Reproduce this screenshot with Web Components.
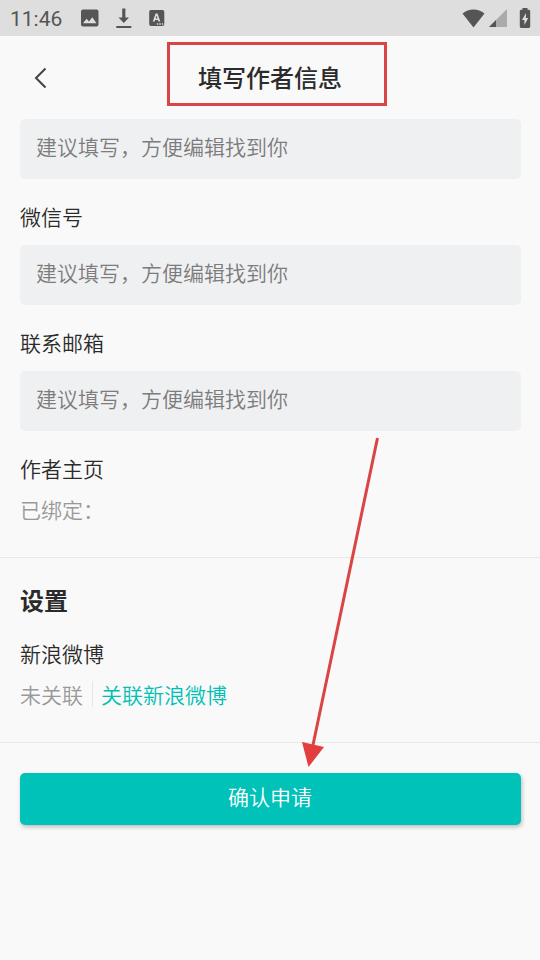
<!DOCTYPE html>
<html lang="zh-CN">
<head>
<meta charset="utf-8">
<meta name="viewport" content="width=device-width, initial-scale=1">
<title>填写作者信息</title>
<style>
  body {
    margin: 0;
    background: #f9f9f9;
    color: #2b2b2b;
    font: 350 21px/26px "Noto Sans CJK SC", sans-serif;
  }
</style>
</head>
<body>
<author-page></author-page>

<script>
const define = (name, html, setup) => {
  const template = document.createElement('template');
  template.innerHTML = html;
  customElements.define(name, class extends HTMLElement {
    constructor() {
      super();
      this.attachShadow({ mode: 'open' }).append(template.content.cloneNode(true));
    }
    connectedCallback() {
      if (setup) setup(this, this.shadowRoot);
    }
  });
};

define('status-bar', `
  <style>
    :host { display: flex; align-items: center; height: 36px; padding: 0 9px 0 10px; background: #dedede; color: #555; font-family: Roboto, sans-serif; font-weight: 400; }
    svg { display: block; fill: currentColor; }
    time { margin-right: 18px; padding-top: 1px; }
    .left { display: flex; align-items: center; gap: 15px; flex: 1; }
    .right { display: flex; align-items: center; gap: 4px; }
    .right svg:last-child { margin-left: 8px; }
  </style>
  <time>11:46</time>
  <div class="left">
    <svg width="20" height="20" viewBox="0 0 20 20"><path fill-rule="evenodd" d="M3 1.500h13.500a2 2 0 0 1 2 2v13a2 2 0 0 1-2 2H3a2 2 0 0 1-2-2v-13a2 2 0 0 1 2-2ZM3 15.300h13.500l-4.200-6-3.300 4.200-2.400-2.800Z"/></svg>
    <svg width="18" height="22" viewBox="0 0 18 22"><path d="M7.200 1.500h3.200v9H14L8.800 16 3.500 10.500h3.700ZM1.300 19h15v2h-15Z"/></svg>
    <svg width="18" height="18" viewBox="0 0 18 18"><path fill-rule="evenodd" d="M3 1h11.500a1.800 1.800 0 0 1 1.800 1.800v12.400a1.800 1.800 0 0 1-1.800 1.800H3a1.800 1.800 0 0 1-1.800-1.800V2.800A1.800 1.800 0 0 1 3 1ZM7.600 4.500 4.800 12.500h1.800l.5-1.600h2.900l.5 1.600h1.800L9.500 4.500Zm1 1.900.9 3.100H7.600ZM8.800 14.200v1.500h1.500v-1.500Zm2.500 0v1.500h1.500v-1.500Zm2.500 0v1.500h1.300v-1.500Z"/></svg>
  </div>
  <div class="right">
    <svg width="23" height="19" viewBox="0 0 23 19"><path d="M0.500 4.500C7-.8 16-.8 22.500 4.500L11.500 18.500Z"/></svg>
    <svg width="18" height="18" viewBox="0 0 18 18"><path fill="#aaa" d="M18 0v18H0Z"/><path d="M7 11v7H0Z"/></svg>
    <svg width="12" height="22" viewBox="0 0 12 22"><path fill-rule="evenodd" d="M3.500 1h5v1.800h1.300c.8 0 1.400.6 1.400 1.400v15.400c0 .8-.6 1.400-1.400 1.400H2.200c-.8 0-1.400-.6-1.400-1.400V4.200c0-.8.6-1.400 1.400-1.400h1.300ZM7 6l-4 7h2.400v5l3.800-7H6.800Z"/></svg>
  </div>
`);

define('page-header', `
  <style>
    :host { display: grid; grid-template-columns: 42px 1fr 42px; align-items: center; height: 83px; padding: 0 20px; }
    button { display: flex; align-items: center; justify-content: center; width: 42px; height: 42px; margin: 0; padding: 0; border: 0; background: none; color: #444; }
    h1 { margin: 0 0 2px; justify-self: center; position: relative; font-size: 24px; line-height: 36px; font-weight: 500; }
    .mark { position: absolute; inset: -17px -45px -11px -31px; border: 3px solid #d94545; pointer-events: none; }
  </style>
  <button type="button" aria-label="返回">
    <svg width="16" height="22" viewBox="0 0 16 22" fill="none" stroke="currentColor" stroke-width="2"><path d="M12.500 1.500 3 11l9.500 9.500"/></svg>
  </button>
  <h1><slot></slot><span class="mark"></span></h1>
`);

define('text-field', `
  <style>
    :host { display: flex; flex-direction: column; }
    label { padding: 24px 0 16px; }
    :host([unlabelled]) label { display: none; }
    input { box-sizing: border-box; width: 100%; height: 60px; margin: 0; padding: 0 16px 6px; border: 0; border-radius: 5px; background: #eff0f2; color: inherit; font: inherit; outline: 0; }
    input::placeholder { color: #7c7c7c; opacity: 1; }
  </style>
  <label for="box"><slot></slot></label>
  <input id="box" type="text">
`, (host, root) => {
  const input = root.getElementById('box');
  input.placeholder = host.getAttribute('placeholder') || '';
  if (host.hasAttribute('unlabelled')) input.setAttribute('aria-label', '联系方式');
});

define('info-row', `
  <style>
    :host { display: flex; flex-direction: column; gap: 15px; }
    .value { display: flex; align-items: center; color: #999; }
  </style>
  <div><slot name="label"></slot></div>
  <div class="value"><slot></slot></div>
`);

define('action-link', `
  <style>
    :host { display: flex; margin-left: 9px; padding-left: 8px; border-left: 1px solid #e6e6e6; }
    a { color: #00bfb4; text-decoration: none; }
  </style>
  <a href="#weibo"><slot></slot></a>
`);

define('submit-button', `
  <style>
    :host { display: block; }
    button { display: block; width: 100%; height: 52px; margin: 0; padding: 0 1px 6px 0; border: 0; border-radius: 5px; background: #00c2b8; color: #fff; font: inherit; box-shadow: 1px 2px 4px rgba(0, 0, 0, .25); }
  </style>
  <button type="button"><slot></slot></button>
`);

define('guide-arrow', `
  <style>
    :host { position: absolute; left: 56%; top: 437px; pointer-events: none; }
    svg { display: block; }
  </style>
  <svg width="80" height="331" viewBox="302 437 80 331" aria-hidden="true">
    <path d="M377.500 438 313 745" stroke="#d94545" stroke-width="3"/>
    <path d="M302 742 324 747 308.500 767Z" fill="#e23e3e"/>
  </svg>
`);

define('author-page', `
  <style>
    :host { display: block; position: relative; }
    section { padding: 0 19px 0 20px; }
    section + section { border-top: 1px solid #e8e8e8; }
    .home { padding: 24px 0 35px; }
    h2 { margin: 0; padding: 24px 0 22px; font-size: 24px; line-height: 36px; font-weight: 700; }
    .settings { padding-bottom: 35px; }
    .submit { padding-top: 30px; padding-bottom: 30px; }
  </style>
  <status-bar></status-bar>
  <page-header>填写作者信息</page-header>
  <main>
    <section>
      <text-field unlabelled placeholder="建议填写，方便编辑找到你"></text-field>
      <text-field placeholder="建议填写，方便编辑找到你">微信号</text-field>
      <text-field placeholder="建议填写，方便编辑找到你">联系邮箱</text-field>
      <info-row class="home"><span slot="label">作者主页</span>已绑定：</info-row>
    </section>
    <section class="settings">
      <h2>设置</h2>
      <info-row><span slot="label">新浪微博</span>未关联<action-link>关联新浪微博</action-link></info-row>
    </section>
    <section class="submit">
      <submit-button>确认申请</submit-button>
    </section>
  </main>
  <guide-arrow></guide-arrow>
`);
</script>
</body>
</html>
